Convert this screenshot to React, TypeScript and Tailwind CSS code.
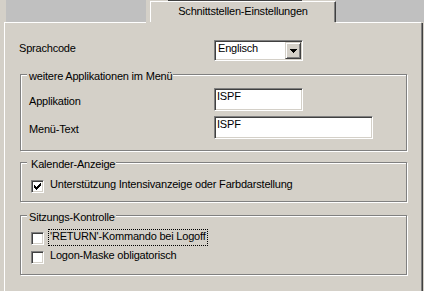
import type { ReactNode } from 'react'

const sunken =
  'border border-t-[#808080] border-l-[#808080] border-b-white border-r-white bg-white shadow-[inset_1px_1px_0_#404040,inset_-1px_-1px_0_#d4d0c8]'

export default function App() {
  return (
    <div className="flex h-[291px] w-[424px] flex-col overflow-hidden bg-[#d4d0c8] font-['Liberation_Sans',Arial,sans-serif] text-[11px] leading-[13px] tracking-[-0.2px] text-black">
      {/* tab strip */}
      <div className="flex h-[22px] shrink-0">
        <div className="w-[6px]" />
        <div className="w-[140px] bg-[#c0c0c0]" />
        <div className="w-[4px]" />
        <div className="flex w-[186px] flex-col">
          <div className="h-px">
            <div className="ml-[18px] h-px w-[134px] bg-[#404040]" />
          </div>
          <div className="flex flex-1 justify-center border-l border-r border-t border-l-white border-r-[#404040] border-t-white pt-[3px] shadow-[inset_-1px_0_0_#808080]">
            Schnittstellen-Einstellungen
          </div>
        </div>
        <div className="flex-1 bg-[#c0c0c0]" />
      </div>
      <div className="flex h-px shrink-0">
        <div className="w-[4px]" />
        <div className="w-[142px] bg-white" />
        <div className="w-[190px]" />
        <div className="w-[85px] bg-white" />
      </div>

      {/* panel */}
      <div className="ml-[4px] w-[419px] flex-1 border-l border-r border-l-white border-r-[#404040] pl-[15px] pt-[17px] shadow-[inset_-1px_0_0_#808080]">
        <div className="-ml-px flex h-[21px]">
          <div className="w-[195px] pt-[2px]">Sprachcode</div>
          <div className={`flex h-[21px] w-[89px] ${sunken}`}>
            <div className="flex-1 pl-[3px] pt-px">Englisch</div>
            <div className="m-px flex h-[17px] w-[16px] items-center justify-center border border-b-[#404040] border-l-[#d4d0c8] border-r-[#404040] border-t-[#d4d0c8] bg-[#d4d0c8] shadow-[inset_1px_1px_0_#fff,inset_-1px_-1px_0_#808080]">
              <svg width="7" height="4" viewBox="0 0 7 4" shapeRendering="crispEdges">
                <path d="M0 0h7v1H0zM1 1h5v1H1zM2 2h3v1H2zM3 3h1v1H3z" fill="#000" />
              </svg>
            </div>
          </div>
        </div>

        <Group title="weitere Applikationen im Menü" className="mt-[13px] h-[77px]" titleClass="pl-[2px]">
          <div className="mt-[5px] flex h-[23px] pl-[8px]">
            <div className="w-[185px] pt-[7px]">Applikation</div>
            <div className={`h-[23px] w-[89px] pl-[2px] pt-px ${sunken}`}>ISPF</div>
          </div>
          <div className="mt-[5px] flex h-[23px] pl-[8px]">
            <div className="w-[185px] pt-[7px]">Menü-Text</div>
            <div className={`h-[23px] w-[159px] pl-[2px] pt-px ${sunken}`}>ISPF</div>
          </div>
        </Group>

        <Group title="Kalender-Anzeige" className="mt-[11px] h-[40px]" titleClass="pl-[4px]">
          <div className="mt-[6px] flex h-[17px] pl-[10px]">
            <CheckBox checked />
            <div className="ml-[4px] h-[17px] border border-transparent px-px">
              Unterstützung Intensivanzeige oder Farbdarstellung
            </div>
          </div>
        </Group>

        <Group title="Sitzungs-Kontrolle" className="mt-[13px] h-[60px]" titleClass="pl-[2px]">
          <div className="mt-[5px] flex h-[17px] pl-[10px]">
            <CheckBox />
            <div className="ml-[4px] h-[17px] border border-dotted border-black px-px">
              'RETURN'-Kommando bei Logoff
            </div>
          </div>
          <div className="mt-[2px] flex h-[17px] pl-[10px]">
            <CheckBox />
            <div className="ml-[4px] h-[17px] border border-transparent px-px">Logon-Maske obligatorisch</div>
          </div>
        </Group>
      </div>
    </div>
  )
}

function Group({
  title,
  className,
  titleClass,
  children,
}: {
  title: string
  className: string
  titleClass: string
  children: ReactNode
}) {
  return (
    <div
      className={`w-[387px] border border-[#808080] shadow-[inset_1px_1px_0_#fff,1px_1px_0_#fff] ${className}`}
    >
      <div className={`-mt-[5px] ml-[6px] h-[13px] w-fit bg-[#d4d0c8] pr-px ${titleClass}`}>{title}</div>
      {children}
    </div>
  )
}

function CheckBox({ checked = false }: { checked?: boolean }) {
  return (
    <div className={`mt-[3px] h-[13px] w-[13px] shrink-0 ${sunken}`}>
      {checked && (
        <svg width="11" height="11" viewBox="0 0 11 11" shapeRendering="crispEdges" className="block">
          <path
            d="M8 2h1v1H8zM7 3h2v1H7zM2 4h1v1H2zM6 4h3v1H6zM2 5h2v1H2zM5 5h3v1H5zM2 6h5v1H2zM3 7h3v1H3zM4 8h1v1H4z"
            fill="#000"
          />
        </svg>
      )}
    </div>
  )
}
